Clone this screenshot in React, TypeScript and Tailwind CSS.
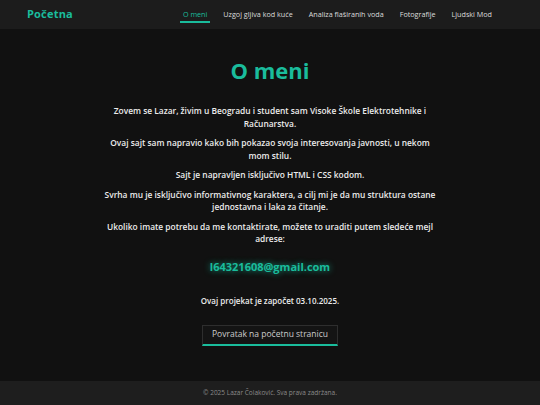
import React from "react";

const navItems = ["O meni", "Uzgoj gljiva kod kuće", "Analiza flaširanih voda", "Fotografije", "Ljudski Mod"];

export default function App() {
  return (
    <div
      className="min-h-screen h-[405px] flex flex-col bg-[#111111] text-[#e6e6e6]"
      style={{ fontFamily: '"Open Sans", "Noto Sans", sans-serif' }}
    >
      <header className="h-[29px] shrink-0 bg-[#1c1c1c] flex items-center justify-between pl-[27px] pr-[45px]">
        <div className="text-[11px] font-bold text-[#1abc9c] tracking-[0.2px]">Početna</div>
        <nav className="flex items-center gap-[10px]">
          {navItems.map((n, i) => (
            <a
              key={n}
              className={
                "px-[3px] pt-[2px] pb-[2px] text-[7.2px] font-medium leading-[10px] border-b-2 " +
                (i === 0 ? "text-[#1abc9c] border-[#1abc9c]" : "text-[#dcdcdc] border-transparent")
              }
            >
              {n}
            </a>
          ))}
        </nav>
      </header>
      <main className="flex-1 flex flex-col items-center pt-[28px]">
        <h1 className="text-[22px] font-bold text-[#1abc9c] leading-[26px]">O meni</h1>
        <div className="w-[340px] mt-[22px] flex flex-col gap-[7px] text-center text-[8.4px] font-semibold leading-[12.5px] text-[#ececec]">
          <p>Zovem se Lazar, živim u Beogradu i student sam Visoke Škole Elektrotehnike i Računarstva.</p>
          <p>Ovaj sajt sam napravio kako bih pokazao svoja interesovanja javnosti, u nekom mom stilu.</p>
          <p>Sajt je napravljen isključivo HTML i CSS kodom.</p>
          <p>Svrha mu je isključivo informativnog karaktera, a cilj mi je da mu struktura ostane jednostavna i laka za čitanje.</p>
          <p>Ukoliko imate potrebu da me kontaktirate, možete to uraditi putem sledeće mejl adrese:</p>
        </div>
        <div
          className="mt-[13px] text-[11px] font-bold text-[#1abc9c] leading-[16px]"
          style={{ textShadow: "0 0 6px rgba(26,188,156,0.8)" }}
        >
          l64321608@gmail.com
        </div>
        <p className="mt-[19px] text-[8px] font-semibold text-[#ececec] leading-[13px]">Ovaj projekat je započet 03.10.2025.</p>
        <a className="mt-[18px] h-[21px] w-[136px] flex items-center justify-center border border-[#2e2e2e] border-b-2 border-b-[#1abc9c] bg-[#141414] text-[8.5px] font-medium text-[#cccccc]">
          Povratak na početnu stranicu
        </a>
      </main>
      <footer className="h-[24px] shrink-0 bg-[#1e1e1e] flex items-center justify-center text-[6.5px] text-[#8a8a8a]">
        © 2025 Lazar Čolaković. Sva prava zadržana.
      </footer>
    </div>
  );
}
